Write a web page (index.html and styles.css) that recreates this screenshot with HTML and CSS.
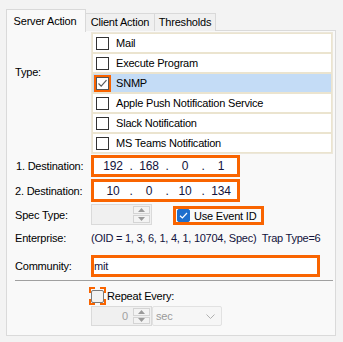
FILE: index.html
```html
<!DOCTYPE html>
<html lang="en">
<head>
    <meta charset="UTF-8">
    <title>Server Action</title>
    <link rel="stylesheet" href="styles.css">
</head>
<body>
    <div class="window">
        <div class="tabs">
            <div class="tab active">Server Action</div>
            <div class="tab client">Client Action</div>
            <div class="tab thresholds">Thresholds</div>
        </div>
        <div class="panel">
            <div class="lbl type-lbl">Type:</div>
            <div class="listbox">
                <div class="item"><span class="cb"></span>Mail</div>
                <div class="item"><span class="cb"></span>Execute Program</div>
                <div class="item selected">
                    <span class="cb marked">
                        <svg width="11" height="11" viewBox="0 0 11 11"><polyline points="1.5,5.5 4.2,8.2 9.5,2.2" fill="none" stroke="#5a5a5a" stroke-width="1.2"/></svg>
                    </span>SNMP</div>
                <div class="item"><span class="cb"></span>Apple Push Notification Service</div>
                <div class="item"><span class="cb"></span>Slack Notification</div>
                <div class="item"><span class="cb"></span>MS Teams Notification</div>
            </div>

            <div class="lbl dest1">1. Destination:</div>
            <div class="ipbox dest1">
                <span class="oct">192</span><span class="dot">.</span>
                <span class="oct">168</span><span class="dot">.</span>
                <span class="oct">0</span><span class="dot">.</span>
                <span class="oct">1</span>
            </div>

            <div class="lbl dest2">2. Destination:</div>
            <div class="ipbox dest2">
                <span class="oct">10</span><span class="dot">.</span>
                <span class="oct">0</span><span class="dot">.</span>
                <span class="oct">10</span><span class="dot">.</span>
                <span class="oct">134</span>
            </div>

            <div class="lbl spec">Spec Type:</div>
            <div class="spec-row">
                <div class="spinner">
                    <span class="value"></span>
                    <span class="arrows">
                        <span class="arrow"><svg width="7" height="4" viewBox="0 0 7 4"><polygon points="0,4 7,4 3.5,0" fill="#9a9a9a"/></svg></span>
                        <span class="arrow"><svg width="7" height="4" viewBox="0 0 7 4"><polygon points="0,0 7,0 3.5,4" fill="#9a9a9a"/></svg></span>
                    </span>
                </div>
                <div class="event-id">
                    <span class="cb blue">
                        <svg width="11" height="11" viewBox="0 0 11 11"><polyline points="2,5.8 4.4,8 9,3" fill="none" stroke="#fff" stroke-width="1.2"/></svg>
                    </span>Use Event ID
                </div>
            </div>

            <div class="lbl ent">Enterprise:</div>
            <div class="ent-text">(OID = 1, 3, 6, 1, 4, 1, 10704, Spec)&nbsp; Trap Type=6</div>

            <div class="lbl comm">Community:</div>
            <div class="community">mit</div>

            <div class="separator"></div>

            <div class="repeat">
                <span class="focus"><span class="cb grey"></span></span>Repeat Every:
            </div>
            <div class="interval">
                <div class="spinner">
                    <span class="value">0</span>
                    <span class="arrows">
                        <span class="arrow"><svg width="7" height="4" viewBox="0 0 7 4"><polygon points="0,4 7,4 3.5,0" fill="#9a9a9a"/></svg></span>
                        <span class="arrow"><svg width="7" height="4" viewBox="0 0 7 4"><polygon points="0,0 7,0 3.5,4" fill="#9a9a9a"/></svg></span>
                    </span>
                </div>
                <div class="dropdown">
                    <span>sec</span>
                    <svg width="9" height="5" viewBox="0 0 9 5"><polyline points="0.5,0.5 4.5,4.5 8.5,0.5" fill="none" stroke="#b0b0b0" stroke-width="1"/></svg>
                </div>
            </div>
        </div>
    </div>
</body>
</html>
```

FILE: styles.css
```css
body {
    margin: 0;
    background: #f3f3f3;
    font-family: "Liberation Sans", Arial, sans-serif;
    font-size: 11px;
    letter-spacing: -0.2px;
    color: #000;
}
.window {
    padding: 8px 0 0 6px;
}
.tabs {
    display: flex;
    align-items: flex-end;
    height: 22px;
    position: relative;
    z-index: 1;
}
.tab {
    box-sizing: border-box;
    height: 18px;
    line-height: 16px;
    text-align: center;
    border: 1px solid #d9d9d9;
    border-bottom: none;
    background: #f0f0f0;
    margin-bottom: -1px;
}
.tab.active {
    width: 80px;
    height: 23px;
    line-height: 23px;
    background: #f9f9f9;
    margin-bottom: -2px;
    padding-right: 2px;
}
.tab.client {
    width: 69px;
    border-left: none;
}
.tab.thresholds {
    width: 61px;
    border-left: none;
}
.panel {
    box-sizing: border-box;
    width: 330px;
    height: 306px;
    border: 1px solid #dadada;
    background: #f9f9f9;
    padding: 1px 2px 0 8px;
    display: grid;
    grid-template-columns: 76px 1fr;
    align-content: start;
}
.lbl {
    display: flex;
    align-items: center;
}
.type-lbl {
    align-items: flex-start;
    padding-top: 34px;
}
.listbox {
    border: 1px solid #ece7da;
    background: #fff;
}
.item {
    box-sizing: border-box;
    height: 20px;
    border: 1px solid #ebe4cf;
    display: flex;
    align-items: center;
    padding-left: 3px;
    background: #fff;
}
.item.selected {
    background: #c4dcf6;
}
.cb {
    box-sizing: border-box;
    width: 13px;
    height: 13px;
    border: 1px solid #333;
    background: #fff;
    margin-right: 7px;
    display: inline-flex;
    align-items: center;
    justify-content: center;
    flex: none;
}
.cb.marked {
    border: 1px solid #555;
    outline: 2px solid #f96400;
    background: #fff;
}
.cb.blue {
    background: #1e6fcd;
    border: 1px solid #1e6fcd;
    border-radius: 2px;
    margin-right: 4px;
}
.cb.grey {
    border: 1px solid #7a7a7a;
    border-radius: 2px;
    background: #f2f2f2;
    margin: 0;
}
.lbl.dest1 {
    margin-top: 1px;
    padding-left: 1px;
}
.ipbox {
    box-sizing: border-box;
    height: 22px;
    width: 149px;
    border: 3px solid #f96400;
    background: #fff;
    display: flex;
    align-items: center;
    padding-left: 6px;
    color: #12123c;
    font-size: 12px;
}
.ipbox.dest1 {
    margin-top: 1px;
}
.ipbox.dest2,
.lbl.dest2 {
    margin-top: 2px;
    height: 23px;
}
.oct {
    width: 26px;
    text-align: center;
}
.dot {
    width: 10px;
    text-align: center;
}
.lbl.spec,
.spec-row {
    margin-top: 2px;
}
.spec-row {
    display: flex;
    align-items: flex-end;
    height: 21px;
}
.spinner {
    box-sizing: border-box;
    width: 61px;
    height: 21px;
    border: 1px solid #dadada;
    background: #f0f0f0;
    display: flex;
    color: #9a9a9a;
}
.spinner .value {
    flex: 1;
    text-align: right;
    padding-right: 4px;
    line-height: 19px;
}
.arrows {
    width: 17px;
    display: flex;
    flex-direction: column;
    padding: 1px;
    gap: 1px;
}
.arrow {
    flex: 1;
    border: 1px solid #d4d4d4;
    background: #f3f3f3;
    display: flex;
    align-items: center;
    justify-content: center;
}
.event-id {
    box-sizing: border-box;
    margin-left: 21px;
    height: 19px;
    width: 91px;
    border: 3px solid #f96400;
    display: flex;
    align-items: center;
    padding-left: 1px;
    white-space: nowrap;
}
.lbl.ent,
.ent-text {
    margin-top: 6px;
    height: 14px;
    line-height: 14px;
}
.ent-text {
    color: #12123c;
    white-space: nowrap;
    letter-spacing: -0.25px;
}
.lbl.comm,
.community {
    margin-top: 10px;
    height: 22px;
}
.community {
    box-sizing: border-box;
    width: 229px;
    border: 3px solid #f96400;
    background: #fff;
    line-height: 16px;
    color: #12123c;
}
.separator {
    grid-column: 1 / -1;
    height: 1px;
    margin-top: 3px;
    background: #a0a0a0;
}
.repeat {
    grid-column: 2;
    margin-top: 6px;
    height: 18px;
    display: flex;
    align-items: center;
}
.focus {
    box-sizing: border-box;
    width: 17px;
    height: 18px;
    margin-left: -2px;
    margin-right: 1px;
    border: 2px dashed #f96400;
    display: flex;
    align-items: center;
    justify-content: center;
}
.interval {
    grid-column: 2;
    margin-top: 1px;
    display: flex;
}
.interval .spinner {
    height: 20px;
}
.interval .value {
    line-height: 18px;
    color: #a0a0a0;
}
.dropdown {
    box-sizing: border-box;
    width: 70px;
    height: 20px;
    border: 1px solid #e2e2e2;
    border-radius: 2px;
    background: #f6f6f6;
    display: flex;
    align-items: center;
    justify-content: space-between;
    padding: 0 6px 0 3px;
    color: #9a9a9a;
}
```
